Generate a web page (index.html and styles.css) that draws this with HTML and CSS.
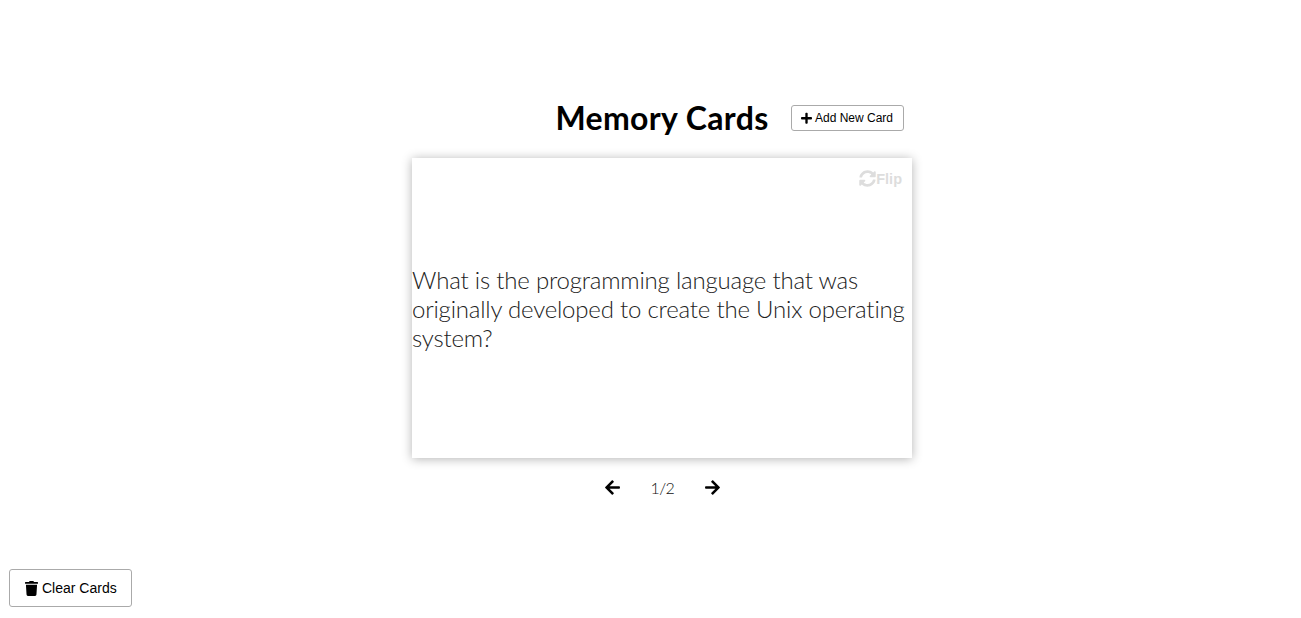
FILE: index.html
```html
<!DOCTYPE html>
<html lang="en">
<head>
<meta charset="utf-8">
<title>Memory Cards</title>
<link rel="stylesheet" href="styles.css">
</head>
<body>
<main class="app">
  <header class="head">
    <h1 class="title">Memory Cards</h1>
    <button class="btn btn-small">
      <svg class="icon-plus" viewBox="0 0 448 512"><path d="M416 208H272V64c0-17.67-14.33-32-32-32h-32c-17.67 0-32 14.33-32 32v144H32c-17.67 0-32 14.33-32 32v32c0 17.67 14.33 32 32 32h144v144c0 17.67 14.33 32 32 32h32c17.67 0 32-14.33 32-32V304h144c17.67 0 32-14.33 32-32v-32c0-17.67-14.33-32-32-32z"/></svg>
      Add New Card
    </button>
  </header>
  <section class="card">
    <p class="question">What is the programming language that was originally developed to create the Unix operating system?</p>
    <div class="flip">
      <svg class="icon-sync" viewBox="0 0 512 512"><path d="M370.72 133.28C339.458 104.008 298.888 87.962 255.848 88c-77.458.068-144.328 53.178-162.791 126.85-1.344 5.363-6.122 9.15-11.651 9.15H24.103c-7.498 0-13.194-6.807-11.807-14.176C33.933 94.924 134.813 8 256 8c66.448 0 126.791 26.136 171.315 68.685L463.03 40.97C478.149 25.851 504 36.559 504 57.941V192c0 13.255-10.745 24-24 24H345.941c-21.382 0-32.09-25.851-16.971-40.971l41.75-41.749zM32 296h134.059c21.382 0 32.09 25.851 16.971 40.971l-41.75 41.75c31.262 29.273 71.835 45.319 114.876 45.28 77.418-.07 144.315-53.144 162.787-126.849 1.344-5.363 6.122-9.15 11.651-9.15h57.304c7.498 0 13.194 6.807 11.807 14.176C478.067 417.076 377.187 504 256 504c-66.448 0-126.791-26.136-171.315-68.685L48.97 471.03C33.851 486.149 8 475.441 8 454.059V320c0-13.255 10.745-24 24-24z"/></svg>Flip
    </div>
  </section>
  <nav class="pager">
    <svg class="icon-arrow" viewBox="0 0 448 512"><path d="M257.5 445.1l-22.2 22.2c-9.4 9.4-24.6 9.4-33.9 0L7 273c-9.4-9.4-9.4-24.6 0-33.9L201.4 44.7c9.4-9.4 24.6-9.4 33.9 0l22.2 22.2c9.5 9.5 9.3 25-.4 34.3L136.6 216H424c13.3 0 24 10.7 24 24v32c0 13.3-10.7 24-24 24H136.6l120.5 114.8c9.8 9.3 10 24.8.4 34.3z"/></svg>
    <span class="count">1/2</span>
    <svg class="icon-arrow" viewBox="0 0 448 512"><path d="M190.5 66.9l22.2-22.2c9.4-9.4 24.6-9.4 33.9 0L441 239c9.4 9.4 9.4 24.6 0 33.9L246.6 467.3c-9.4 9.4-24.6 9.4-33.9 0l-22.2-22.2c-9.5-9.5-9.3-25 .4-34.3L311.4 296H24c-13.3 0-24-10.7-24-24v-32c0-13.3 10.7-24 24-24h287.4L190.9 101.2c-9.8-9.3-10-24.8-.4-34.3z"/></svg>
  </nav>
</main>
<button class="btn btn-clear">
  <svg class="icon-trash" viewBox="0 0 448 512"><path d="M432 32H312l-9.4-18.7A24 24 0 0 0 281.1 0H166.8a23.72 23.72 0 0 0-21.4 13.3L136 32H16A16 16 0 0 0 0 48v32a16 16 0 0 0 16 16h416a16 16 0 0 0 16-16V48a16 16 0 0 0-16-16zM53.2 467a48 48 0 0 0 47.9 45h245.8a48 48 0 0 0 47.9-45L416 128H32z"/></svg>
  Clear Cards
</button>
</body>
</html>
```
FILE: styles.css
```css
* { box-sizing: border-box; }
html, body { margin: 0; height: 100%; }
body {
  position: relative;
  height: 618px;
  overflow: hidden;
  background: #fff;
  color: #000;
  font-family: Lato, sans-serif;
}
.app {
  display: flex;
  flex-direction: column;
  align-items: center;
  padding: 98px 0 0 23px;
}
.head {
  position: relative;
  width: 500px;
  height: 40px;
  display: flex;
  justify-content: center;
  align-items: center;
}
.title {
  margin: 0;
  font-size: 32px;
  line-height: 40px;
  font-weight: 700;
  letter-spacing: 0.35px;
}
.btn {
  display: flex;
  align-items: center;
  background: #fff;
  border: 1px solid #aaa;
  border-radius: 3px;
  color: #000;
  font-family: "Liberation Sans", Arial, sans-serif;
  padding: 0;
}
.btn-small {
  position: absolute;
  left: 379px;
  top: 7px;
  width: 113px;
  height: 26px;
  padding-left: 9px;
  font-size: 12px;
  gap: 3px;
}
.icon-plus { width: 11px; height: 12.5px; fill: #000; }
.card {
  position: relative;
  width: 500px;
  height: 300px;
  margin-top: 20px;
  display: flex;
  align-items: center;
  background: #fff;
  box-shadow: 0 1px 10px rgba(0, 0, 0, 0.3);
}
.question {
  margin: 0;
  font-size: 24px;
  font-weight: 300;
  line-height: 29px;
  letter-spacing: -0.2px;
  color: #222;
}
.flip {
  position: absolute;
  top: 12px;
  right: 10px;
  display: flex;
  align-items: center;
  color: #ddd;
  font-family: "Liberation Sans", Arial, sans-serif;
  font-size: 14.5px;
  font-weight: 700;
}
.icon-sync { width: 17px; height: 17px; fill: #ddd; }
.pager {
  display: flex;
  align-items: center;
  gap: 31px;
  height: 20px;
  margin-top: 19px;
}
.icon-arrow { width: 15px; height: 17px; fill: #000; }
.count {
  font-size: 16px;
  font-weight: 300;
  line-height: 22px;
  padding-top: 2px;
  letter-spacing: -0.6px;
  color: #111;
  width: 23px;
  text-align: center;
  white-space: nowrap;
}
.btn-clear {
  position: absolute;
  left: 9px;
  top: 569px;
  width: 123px;
  height: 38px;
  padding-left: 15px;
  font-size: 14px;
  gap: 4px;
}
.icon-trash { width: 13px; height: 15px; fill: #000; }
```
